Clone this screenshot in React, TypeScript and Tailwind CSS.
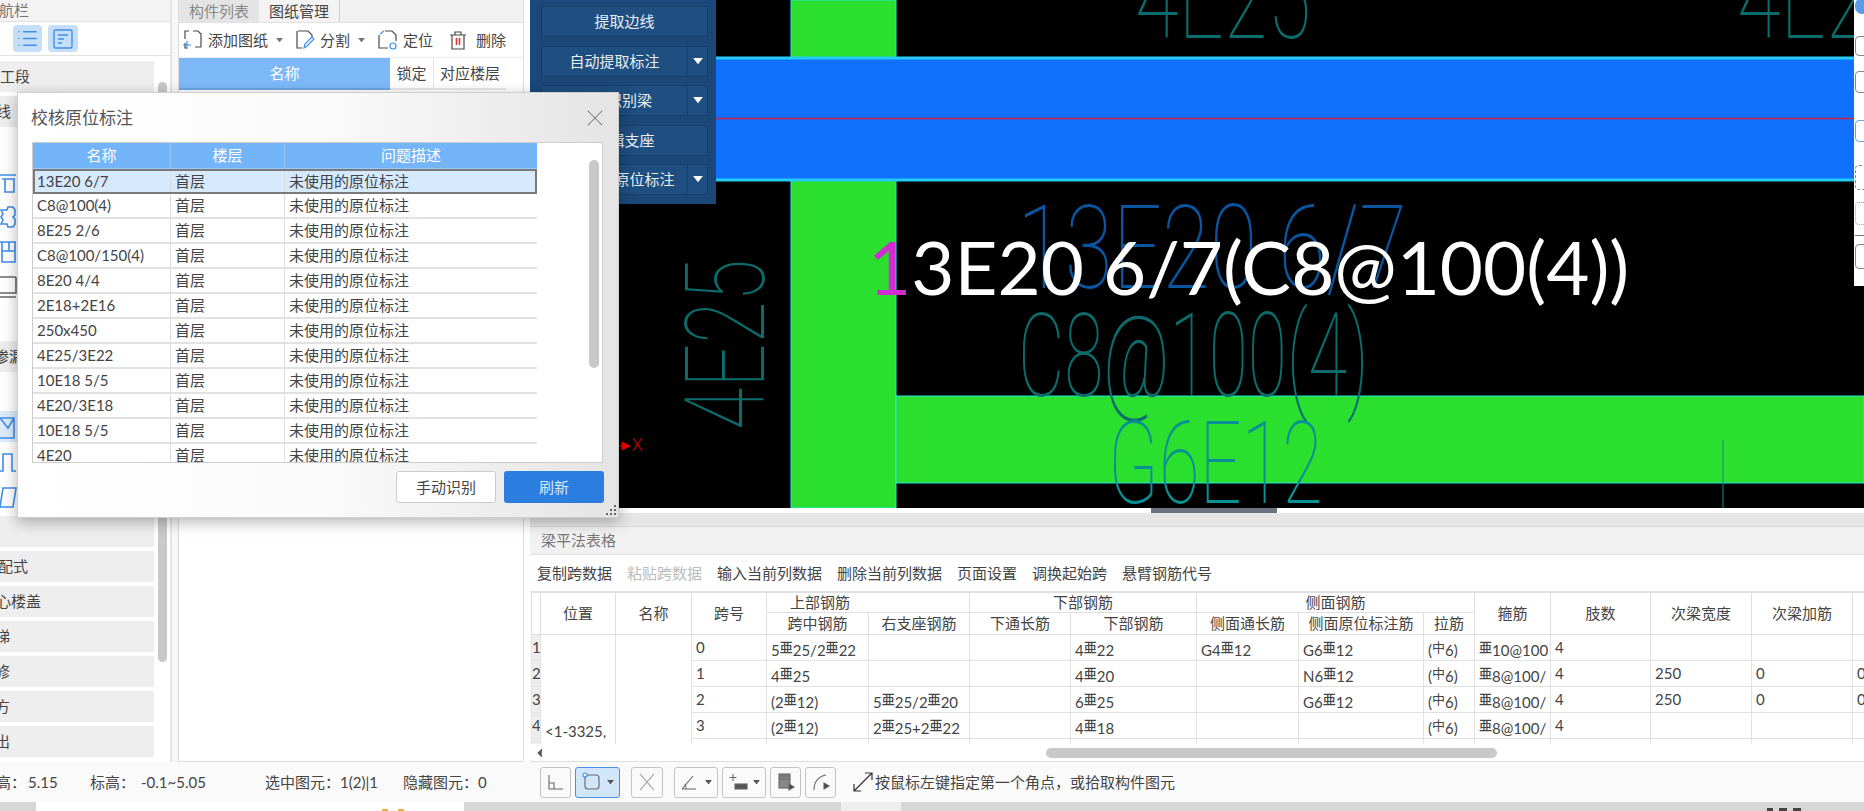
import React from "react";
import { ChevronLeft, List, X } from "lucide-react";

const dialogRows = [
  "13E20 6/7",
  "C8@100(4)",
  "8E25 2/6",
  "C8@100/150(4)",
  "8E20 4/4",
  "2E18+2E16",
  "250x450",
  "4E25/3E22",
  "10E18 5/5",
  "4E20/3E18",
  "10E18 5/5",
  "4E20",
];

const beamRows = [
  ["0", "5#25/2#22", "", "", "4#22", "G4#12", "G6#12", "($6)", "#10@100", "4", "", "", ""],
  ["1", "4#25", "", "", "4#20", "", "N6#12", "($6)", "#8@100/", "4", "250", "0", "0"],
  ["2", "(2#12)", "5#25/2#20", "", "6#25", "", "G6#12", "($6)", "#8@100/", "4", "250", "0", "0"],
  ["3", "(2#12)", "2#25+2#22", "", "4#18", "", "", "($6)", "#8@100/", "4", "", "", ""],
  ["4", "(2#12)", "2#25+2#22", "", "4#18", "", "", "($6)", "#8@100/", "4", "", "", ""],
];

const colWidths = [9, 75, 76, 75, 102, 101, 101, 126, 102, 125, 51, 76, 100, 101, 101, 20];

// 钢筋符号 is a raised small glyph inside the cell text
const RebarText = ({ text }: { text: string }) => (
  <>
    {text.split(/([#$])/).map((part, i) =>
      part === "#" ? (
        <span key={i} className="text-[13px] align-[4px] font-medium">亜</span>
      ) : part === "$" ? (
        <span key={i} className="text-[13px] align-[4px]">中</span>
      ) : (
        <span key={i}>{part}</span>
      ),
    )}
  </>
);

const NavItem = ({ label, offset }: { label: string; offset: string }) => (
  <div className="h-[31px] w-[154px] bg-[#eeeeee] flex items-center overflow-hidden shrink-0">
    <span className={`${offset} whitespace-nowrap`}>{label}</span>
  </div>
);

const NavIcon = ({ children, active }: { children: React.ReactNode; active?: boolean }) => (
  <div className={`h-[31px] w-[154px] flex items-center overflow-hidden shrink-0 ${active ? "bg-[#dcebfa]" : ""}`}>
    <svg width="17" height="26" viewBox="0 0 17 26" fill="none" stroke="#3f8ee8" strokeWidth="1.6">
      {children}
    </svg>
  </div>
);

const LeftNav = () => (
  <div className="w-[172px] h-full border-r-2 border-[#e4e4e4] bg-white shrink-0 flex flex-col">
    <div className="h-[22px] bg-[#f3f3f3] text-[#777] flex items-center border-b border-[#e2e2e2]">
      <span className="-ml-[1px]">航栏</span>
    </div>
    <div className="h-[34px] border-b border-[#e2e2e2] flex items-center gap-[6px] pl-[13px]">
      <div className="w-[29px] h-[27px] rounded bg-[#c6dff8] flex items-center justify-center">
        <List size={23} strokeWidth={1.5} color="#3f8ee8" />
      </div>
      <div className="w-[30px] h-[27px] rounded bg-[#c6dff8] flex items-center justify-center">
        <svg width="20" height="20" viewBox="0 0 20 20" fill="none" stroke="#3f8ee8" strokeWidth="1.4">
          <rect x="1" y="1" width="18" height="18" rx="1.5" />
          <path d="M5 6h10M5 10h6M5 14h4" />
        </svg>
      </div>
    </div>
    <div className="flex-1 flex pt-[5px] relative">
      <div className="flex flex-col gap-[4px]">
        <NavItem label="工段" offset="ml-0" />
        <NavItem label="线" offset="-ml-[4px]" />
        <div className="h-[31px] shrink-0" />
        <NavIcon>
          <path d="M0 6h16M2 10h13M5 10v13h9V10" />
        </NavIcon>
        <NavIcon>
          <path d="M1 6h6l1-3h5l2 3v5l-2 2 2 2v5l-2 3H8l-1-3H1l2-4-2-3 2-3z" />
        </NavIcon>
        <NavIcon>
          <path d="M0 3h16M2 3v20h13V3M2 12h13M9 3v9" />
        </NavIcon>
        <NavIcon>
          <path d="M0 3h15a1 1 0 0 1 1 1v15H0M0 23h16" stroke="#666" />
        </NavIcon>
        <div className="h-[31px] shrink-0" />
        <NavItem label="渗漏" offset="-ml-[6px]" />
        <div className="h-[31px] shrink-0" />
        <NavIcon active>
          <path d="M0 4h14v20H0M0 4l8 10 6-10" />
        </NavIcon>
        <NavIcon>
          <path d="M0 22h3V5h9v17h4" />
        </NavIcon>
        <NavIcon>
          <path d="M3 4h13l-3 19H0z" />
        </NavIcon>
        <div className="h-[31px] w-[154px] bg-[#eeeeee] shrink-0" />
        <NavItem label="配式" offset="-ml-[2px]" />
        <NavItem label="心楼盖" offset="-ml-[4px]" />
        <NavItem label="梯" offset="-ml-[5px]" />
        <NavItem label="修" offset="-ml-[5px]" />
        <NavItem label="方" offset="-ml-[5px]" />
        <NavItem label="出" offset="-ml-[5px]" />
      </div>
      <div className="ml-[4px] mt-[21px] w-[9px] h-[580px] rounded-full bg-[#c9c9c9]" />
    </div>
  </div>
);

const ToolIcon = ({ children }: { children: React.ReactNode }) => (
  <svg width="20" height="20" viewBox="0 0 20 20" fill="none" stroke="#4a4a4a" strokeWidth="1.2" className="shrink-0">
    {children}
  </svg>
);

const Caret = ({ color = "#777", size = 7 }: { color?: string; size?: number }) => (
  <svg width={size} height={size * 0.7} viewBox="0 0 7 5" className="shrink-0">
    <path d="M0 0h7L3.500 4.500z" fill={color} />
  </svg>
);

const MiddlePanel = () => (
  <div className="w-[352px] h-full pl-[6px] bg-[#f7f7f7] shrink-0">
    <div className="h-full border-x border-b border-[#dcdcdc] bg-white flex flex-col">
      <div className="h-[23px] bg-[#f1f1f1] flex border-b border-[#e0e0e0]">
        <div className="w-[80px] bg-[#e4e4e4] text-[#888] flex items-center justify-center">构件列表</div>
        <div className="w-[81px] bg-[#f3f3f3] text-[#444] flex items-center justify-center border-r border-[#d0d0d0]">图纸管理</div>
      </div>
      <div className="h-[35px] flex items-center pl-[4px] text-[#444] border-b border-[#ececec]">
        <ToolIcon>
          <path d="M6 1H2v8M10 1h5l3 3v13h-6M2 13v5h2" />
          <path d="M4 11v8M0 15h8" stroke="#3f8ee8" />
        </ToolIcon>
        <span className="ml-[5px]">添加图纸</span>
        <span className="ml-[8px]"><Caret /></span>
        <span className="ml-[12px]">
          <ToolIcon>
            <path d="M3 1h10l4 4v2M2 1v17h5" />
            <path d="M9 18l1-4 7-7 2 2-7 7z" stroke="#3f8ee8" />
          </ToolIcon>
        </span>
        <span className="ml-[5px]">分割</span>
        <span className="ml-[8px]"><Caret /></span>
        <span className="ml-[13px]">
          <ToolIcon>
            <path d="M1 5v13h9M7 1h7l4 4v6" />
            <circle cx="15" cy="16" r="3" stroke="#3f8ee8" />
            <path d="M2 4l4-3" stroke="#3f8ee8" />
          </ToolIcon>
        </span>
        <span className="ml-[5px]">定位</span>
        <span className="ml-[15px]">
          <ToolIcon>
            <path d="M2 5h16M7 5V2h6v3M4 5v14h12V5" />
            <path d="M8.500 8v7M11.500 8v7" stroke="#e0352b" strokeWidth="1.6" />
          </ToolIcon>
        </span>
        <span className="ml-[8px]">删除</span>
      </div>
      <div className="h-[32px] flex text-[#444]">
        <div className="w-[211px] bg-[#7db8f8] border-b-2 border-[#6aa5e6] text-white flex items-center justify-center">名称</div>
        <div className="w-[44px] flex items-center justify-center border-r border-[#e4e4e4] border-b-2 border-b-[#e8e8e8]">锁定</div>
        <div className="w-[72px] flex items-center justify-center border-b-2 border-[#e8e8e8]">对应楼层</div>
      </div>
    </div>
  </div>
);

const SideButton = ({ label, drop }: { label: string; drop?: boolean }) => (
  <div className="h-[31px] flex border border-[#173e68] bg-[#1f4e80] text-[#e8eef5] text-[15px]">
    <div className="flex-1 flex items-center justify-center">{label}</div>
    {drop && (
      <div className="w-[20px] border-l border-[#173e68] flex items-center justify-center">
        <Caret color="#ffffff" size={10} />
      </div>
    )}
  </div>
);

const CadText = ({ className, children }: { className: string; children: string }) => (
  <span className={`absolute origin-top-left whitespace-nowrap leading-none font-thin font-['Roboto',sans-serif] ${className}`}>
    {children}
  </span>
);

const Canvas = () => (
  <div className="relative h-[508px] bg-black overflow-hidden">
    <svg className="absolute inset-0" width="1334" height="508">
      <rect x="261" y="0" width="105" height="508" fill="#2bdf2f" stroke="#24e8e0" />
      <rect x="366" y="396" width="968" height="87" fill="#2bdf2f" stroke="#24e8e0" />
      <rect x="0" y="58" width="1334" height="122" fill="#1070ff" stroke="#22ccf5" strokeWidth="3" />
      <path d="M0 118.500H1334" stroke="#d0203c" strokeWidth="1.500" />
      <path d="M1193 440V508" stroke="#0a8c8c" />
      <path d="M89 446l10 0M92 442l8 4-8 4z" stroke="#f00000" fill="#f00000" />
    </svg>

    <CadText className="left-[605px] top-[-60px] text-[117px] scale-x-[0.68] text-[#0a6c6c]">4E25</CadText>
    <CadText className="left-[1207px] top-[-60px] text-[117px] scale-x-[0.68] text-[#0a6c6c]">4E25</CadText>
    <CadText className="left-[487px] top-[190px] text-[117px] scale-x-[0.745] text-[#0a55a0]">13E20 6/7</CadText>
    <CadText className="left-[488px] top-[298px] text-[117px] scale-x-[0.61] text-[#0a6c6c]">C8@100(4)</CadText>
    <CadText className="left-[578px] top-[406px] text-[115px] scale-x-[0.645] text-[#0a8f94]">G6E12</CadText>
    <CadText className="left-[140px] top-[430px] text-[112px] scale-x-[0.69] -rotate-90 text-[#0a6c6c]">4E25</CadText>

    <span className="absolute left-[102px] top-[436px] text-[17px] leading-none font-light text-[#f00000]">X</span>

    <div className="absolute left-[338px] top-[222px] text-[74.500px] leading-[88px] whitespace-nowrap text-white font-['Lato','Noto_Sans',sans-serif]">
      <span className="text-[#d22bd2]">1</span>3E20 6/7(C8@100(4))
    </div>

    <div className="absolute left-0 top-0 w-[186px] h-[204px] bg-[#1b4878] border border-[#174a80] pl-[10px] pr-[7px] pt-[5px] flex flex-col gap-[8.500px]">
      <SideButton label="提取边线" />
      <SideButton label="自动提取标注" drop />
      <SideButton label="点选识别梁" drop />
      <SideButton label="编辑支座" />
      <SideButton label="点选识别原位标注" drop />
    </div>

    <div className="absolute right-0 top-0 w-[10px] h-[286px] bg-white overflow-hidden flex flex-col pl-[1px]">
      <div className="h-[16px] mt-[-2px] w-[14px] rounded-full bg-[#5b9bec]" />
      <div className="h-[20px] mt-[22px] w-[14px] rounded border border-[#888]" />
      <div className="h-[22px] mt-[15px] w-[14px] rounded border border-[#888]" />
      <div className="h-[22px] mt-[27px] w-[14px] rounded border border-[#6aa5e6]" />
      <div className="h-[25px] mt-[23px] w-[14px] rounded border border-dashed border-[#888]" />
      <div className="h-[23px] mt-[12px] w-[14px] rounded border border-dotted border-[#999]" />
      <div className="h-[1px] mt-[10px] w-[14px] bg-[#777]" />
      <div className="h-[25px] mt-[8px] w-[14px] rounded border border-[#888]" />
    </div>
  </div>
);

const hd = "border border-[#dfdfdf] font-normal text-center whitespace-nowrap overflow-hidden";
const td = "border border-[#e2e2e2] whitespace-nowrap overflow-hidden text-left";

const BeamTable = () => (
  <div className="h-[152px] overflow-hidden">
    <table className="table-fixed border-collapse w-[1341px] text-[15px] text-[#444]">
      <colgroup>
        {colWidths.map((w, i) => (
          <col key={i} style={{ width: w }} />
        ))}
      </colgroup>
      <thead>
        <tr>
          <th className={hd} rowSpan={2} />
          <th className={hd} rowSpan={2}>位置</th>
          <th className={hd} rowSpan={2}>名称</th>
          <th className={hd} rowSpan={2}>跨号</th>
          <th className={hd} colSpan={2}>
            <div className="h-[19px] leading-[19px] pr-[96px]">上部钢筋</div>
          </th>
          <th className={hd} colSpan={2}>
            <div className="h-[19px] leading-[19px]">下部钢筋</div>
          </th>
          <th className={hd} colSpan={3}>
            <div className="h-[19px] leading-[19px]">侧面钢筋</div>
          </th>
          <th className={hd} rowSpan={2}>箍筋</th>
          <th className={hd} rowSpan={2}>肢数</th>
          <th className={hd} rowSpan={2}>次梁宽度</th>
          <th className={hd} rowSpan={2}>次梁加筋</th>
          <th className={hd} rowSpan={2} />
        </tr>
        <tr>
          {["跨中钢筋", "右支座钢筋", "下通长筋", "下部钢筋", "侧面通长筋", "侧面原位标注筋", "拉筋"].map((label) => (
            <th key={label} className={hd}>
              <div className="h-[21px] leading-[21px]">{label}</div>
            </th>
          ))}
        </tr>
      </thead>
      <tbody>
        {beamRows.map((row, r) => (
          <tr key={r}>
            <td className="border border-[#e2e2e2] bg-[#eeeeee] overflow-hidden text-left">
              <div className="h-[25px] leading-[25px]">{r + 1}</div>
            </td>
            {r === 0 && (
              <>
                <td className={`${td} align-top pl-[4px] pt-[85px]`} rowSpan={5}>&lt;1-3325,</td>
                <td className={td} rowSpan={5} />
              </>
            )}
            {row.map((cell, c) => (
              <td key={c} className={td}>
                <div className="h-[25px] leading-[25px] pl-[4px] overflow-hidden">
                  <RebarText text={cell} />
                </div>
              </td>
            ))}
          </tr>
        ))}
      </tbody>
    </table>
  </div>
);

const BottomPanel = () => (
  <div className="h-[254px] bg-white flex flex-col">
    <div className="h-[5px] bg-white flex justify-center pl-[34px]">
      <div className="w-[126px] bg-[#6b7280]" />
    </div>
    <div className="h-[14px] bg-[#e6e6e6] border-b border-[#dadada]" />
    <div className="h-[28px] bg-[#f1f1f1] border-b border-[#e2e2e2] flex items-center pl-[11px] text-[#777]">梁平法表格</div>
    <div className="h-[36px] flex items-center pl-[7px] gap-[15px] text-[#444] whitespace-nowrap">
      <span>复制跨数据</span>
      <span className="text-[#bbbbbb]">粘贴跨数据</span>
      <span>输入当前列数据</span>
      <span>删除当前列数据</span>
      <span>页面设置</span>
      <span>调换起始跨</span>
      <span>悬臂钢筋代号</span>
    </div>
    <div className="border-t border-[#e2e2e2] pl-[1px]">
      <BeamTable />
    </div>
    <div className="flex-1 flex items-center pl-[3px] border-b border-[#dedede]">
      <ChevronLeft size={14} fill="#555" color="#555" />
      <div className="ml-[499px] w-[451px] h-[10px] rounded-full bg-[#c9c9c9]" />
    </div>
  </div>
);

const StatusButton = ({ width, selected, caret, children }: { width: string; selected?: boolean; caret?: boolean; children: React.ReactNode }) => (
  <div className={`${width} h-[31px] rounded-[3px] border flex items-center justify-center gap-[5px] ${selected ? "bg-[#d2e6fa] border-[#4a90e2]" : "border-[#c4c4c4]"}`}>
    <svg width="20" height="20" viewBox="0 0 20 20" fill="none" stroke="#666" strokeWidth="1.1">
      {children}
    </svg>
    {caret && <Caret color="#555" />}
  </div>
);

const StatusBar = () => (
  <div className="h-[40px] bg-[#fafafa] flex items-center text-[#444] whitespace-nowrap">
    <span className="w-[28px] -ml-[2px] overflow-hidden shrink-0 flex justify-end">高：</span>
    <span className="ml-[2px] w-[62px]">5.15</span>
    <span className="w-[51px]">标高：</span>
    <span className="w-[124px]">-0.1~5.05</span>
    <span className="w-[138px]">选中图元：1(2)|1</span>
    <span className="w-[137px]">隐藏图元：0</span>
    <div className="flex items-center gap-[4px]">
      <StatusButton width="w-[31px]">
        <path d="M3 3v14h14M3 11h5v6" />
      </StatusButton>
      <StatusButton width="w-[45px]" selected caret>
        <rect x="3" y="3" width="14" height="14" rx="3" />
        <circle cx="3" cy="3" r="2" fill="#fff" stroke="#3f8ee8" />
      </StatusButton>
      <span className="w-[3px]" />
      <StatusButton width="w-[32px]">
        <path d="M3 2l14 16M17 2L3 18" stroke="#999" />
      </StatusButton>
      <span className="w-[3px]" />
      <StatusButton width="w-[44px]" caret>
        <path d="M2 17h14M2 17L13 4M6 17a8 8 0 0 0-1-5" />
      </StatusButton>
      <StatusButton width="w-[44px]" caret>
        <path d="M5 2v7M1.500 5.500h7" />
        <rect x="7" y="12" width="12" height="5" fill="#555" />
      </StatusButton>
      <StatusButton width="w-[31px]">
        <rect x="3" y="2" width="11" height="14" fill="#888" />
        <path d="M3 4h11M3 7h11M13 12l5 3-5 3z" fill="#444" />
      </StatusButton>
      <StatusButton width="w-[31px]">
        <path d="M3 18c0-8 3-13 12-15" />
        <path d="M13 11l5 3-5 3z" fill="#444" />
      </StatusButton>
    </div>
    <svg className="ml-[17px]" width="20" height="20" viewBox="0 0 20 20" fill="none" stroke="#333" strokeWidth="1.2">
      <path d="M1 19L19 1M12 1h7v7M1 12v7h7" />
    </svg>
    <span className="ml-[2px]">按鼠标左键指定第一个角点，或拾取构件图元</span>
  </div>
);

const Dialog = () => (
  <div className="absolute left-[17px] top-[92px] w-[602px] h-[426px] border border-[#cfcfcf] shadow-[0_4px_14px_rgba(0,0,0,0.3)] bg-linear-to-r from-white via-[#fbfbfb] to-[#e4e4e4] flex flex-col text-[15px]">
    <div className="h-[49px] shrink-0 flex items-center justify-between pl-[13px] pr-[9px]">
      <span className="text-[17px] text-[#555]">校核原位标注</span>
      <X size={28} strokeWidth={0.9} color="#777" />
    </div>
    <div className="mx-[14px] h-[321px] shrink-0 w-[571px] border border-[#cccccc] bg-white flex overflow-hidden relative">
      <div className="w-[504px] shrink-0">
        <div className="h-[26px] flex bg-[#74b4f8] text-white border-b border-[#9cc9f8]">
          <div className="w-[138px] flex items-center justify-center border-r border-[#9cc9f8]">名称</div>
          <div className="w-[114px] flex items-center justify-center border-r border-[#9cc9f8]">楼层</div>
          <div className="flex-1 flex items-center justify-center">问题描述</div>
        </div>
        {dialogRows.map((name, i) => (
          <div key={i} className={`h-[25px] flex text-[#444] ${i === 0 ? "bg-[#d6e9fd] border-2 border-[#7a7a7a]" : "border-b-2 border-[#e2e2e2]"}`}>
            <div className={`flex items-center border-r border-[#dddddd] whitespace-nowrap ${i === 0 ? "w-[136px] pl-[2px]" : "w-[138px] pl-[4px]"}`}>
              {name}
            </div>
            <div className="w-[114px] pl-[4px] flex items-center border-r border-[#dddddd]">首层</div>
            <div className="flex-1 pl-[4px] flex items-center">未使用的原位标注</div>
          </div>
        ))}
      </div>
      <div className="absolute left-[556px] top-[17px] w-[10px] h-[208px] rounded-full bg-[#c9c9c9]" />
    </div>
    <div className="flex justify-end gap-[8px] pr-[14px] pt-[8px]">
      <button className="w-[100px] h-[32px] rounded-[3px] border border-[#cccccc] bg-white text-[#444]">手动识别</button>
      <button className="w-[100px] h-[32px] rounded-[3px] bg-[#2b7de0] text-[#d8e8fa]">刷新</button>
    </div>
    <svg className="absolute right-[2px] bottom-[2px]" width="10" height="10" viewBox="0 0 10 10" fill="#666">
      <rect x="8" y="0" width="2" height="2" />
      <rect x="4" y="4" width="2" height="2" />
      <rect x="8" y="4" width="2" height="2" />
      <rect x="0" y="8" width="2" height="2" />
      <rect x="4" y="8" width="2" height="2" />
      <rect x="8" y="8" width="2" height="2" />
    </svg>
  </div>
);

export default function App() {
  return (
    <div className="relative w-[1864px] h-[811px] overflow-hidden bg-white text-[15px] text-[#444] font-['Lato','Noto_Sans_CJK_SC',sans-serif]">
      <div className="flex h-[762px]">
        <LeftNav />
        <MiddlePanel />
        <div className="w-[6px] bg-white shrink-0" />
        <div className="flex-1 flex flex-col min-w-0">
          <Canvas />
          <BottomPanel />
        </div>
      </div>
      <StatusBar />
      <div className="h-[9px] bg-[#d6d6d6] flex">
        <div className="ml-[36px] w-[428px] bg-white flex justify-end items-end pr-[60px] gap-[10px]">
          <div className="w-[6px] h-[2px] bg-[#f0b040]" />
          <div className="w-[6px] h-[2px] bg-[#f0b040]" />
        </div>
        <div className="ml-[377px] w-[60px] bg-[#eeeeee]" />
        <div className="ml-[866px] flex items-end gap-[6px]">
          <div className="w-[6px] h-[3px] bg-[#444]" />
          <div className="w-[8px] h-[3px] bg-[#444]" />
          <div className="w-[8px] h-[3px] bg-[#444]" />
        </div>
      </div>
      <Dialog />
    </div>
  );
}
